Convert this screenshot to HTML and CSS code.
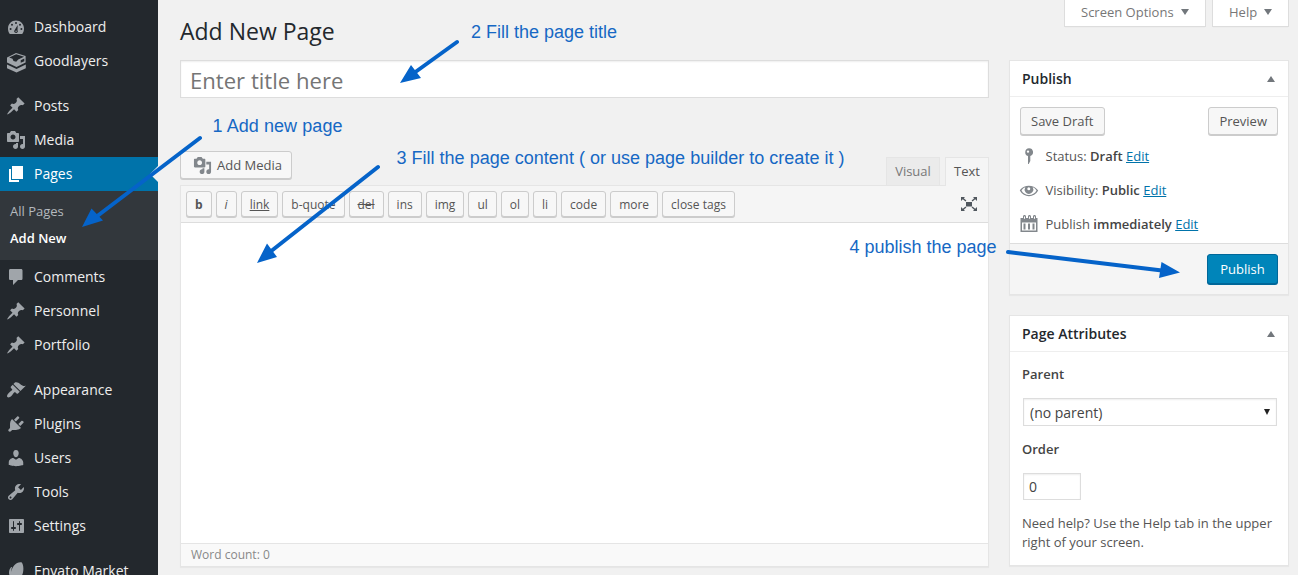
FILE: index.html
```html
<!DOCTYPE html>
<html lang="en">
<head>
<meta charset="utf-8">
<title>Add New Page</title>
<link rel="stylesheet" href="styles.css">
</head>
<body>
<svg class="defs" width="0" height="0">
  <symbol id="i-dash" viewBox="0 0 20 20"><path fill-rule="evenodd" d="M3.8 17h12.4C17.5 15.600 18 13.600 18 11.500 18 7 14.400 3.500 10 3.500S2 7 2 11.500c0 2.100.500 4.100 1.800 5.500zM9 6a1 1 0 1 1 2 0 1 1 0 0 1-2 0zM5 7.800a1 1 0 1 1 2 0 1 1 0 0 1-2 0zM13 7.800a1 1 0 1 1 2 0 1 1 0 0 1-2 0zM3.600 12a1 1 0 1 1 2 0 1 1 0 0 1-2 0zM14.400 12a1 1 0 1 1 2 0 1 1 0 0 1-2 0zM11.700 8l-.200 5.300c.900 1.300.100 2.700-1.500 2.700-1.700 0-2.400-1.700-1.300-2.900zM9.400 14.300a.700.700 0 1 0 1.400 0 .700.700 0 0 0-1.400 0z"/></symbol>
  <symbol id="i-good" viewBox="0 0 20 22"><path fill-rule="evenodd" d="M1 6.500L10 2l9.600 3v6.500L10.500 16 1 11.500zM3.200 6.400l3.300 1.300 1 2.300 2.700.8 2-2.300 5.900-2.700-7.900-2.500z"/><path d="M1 13.600l9.500 4.300 9.300-4.300v3.600L10.500 21.500 1 17.200z"/><path d="M14.700 9.200l3.600-1.600v2.600l-3.600 1.600z" fill="#23282d"/></symbol>
  <symbol id="i-post" viewBox="0 0 20 20"><path d="M10.440 3.020l1.820-1.820 6.360 6.350-1.830 1.820c-1.050-.68-2.480-.57-3.410.36l-.75.75c-.92.93-1.040 2.350-.35 3.410l-1.830 1.820-2.410-2.410-2.800 2.790c-.42.42-3.380 2.710-3.800 2.290s1.860-3.390 2.280-3.810l2.790-2.790L4.100 9.360l1.830-1.820c1.050.69 2.480.57 3.400-.36l.75-.75c.93-.92 1.050-2.350.36-3.410z"/></symbol>
  <symbol id="i-media" viewBox="0 0 20 20"><path d="M13 11V4c0-.55-.45-1-1-1h-1.670L9 1H5L3.670 3H2c-.55 0-1 .45-1 1v7c0 .55.45 1 1 1h10c.55 0 1-.45 1-1zM7 4.500c1.380 0 2.500 1.120 2.500 2.500S8.380 9.500 7 9.500 4.500 8.380 4.500 7 5.620 4.500 7 4.500zM14 6h5v10.500c0 1.380-1.120 2.500-2.500 2.500S14 17.880 14 16.500s1.120-2.500 2.500-2.500c.17 0 .34.02.5.05V9h-3V6zm-4 8.050V13h2v3.500c0 1.380-1.120 2.500-2.500 2.500S7 17.880 7 16.500 8.120 14 9.500 14c.17 0 .34.02.5.05z"/></symbol>
  <symbol id="i-page" viewBox="0 0 20 20"><path d="M6 15V2h11v13H6zm-1 1h8v2H3V5h2v11z"/></symbol>
  <symbol id="i-comment" viewBox="0 0 20 20"><path d="M4.500 2h10.500c1 0 1.500.6 1.500 1.500V11.500c0 1-.6 1.500-1.500 1.500h-3l-5 5v-5H4.500C3.600 13 3 12.500 3 11.500V3.500C3 2.600 3.500 2 4.500 2z"/></symbol>
  <symbol id="i-brush" viewBox="0 0 20 20"><path d="M14.480 11.060L7.410 3.990l1.500-1.500c.5-.56 2.300-.47 3.510.32 1.210.8 1.430 1.280 2.910 2.100 1.180.64 2.450 1.260 4.450.85zm-.71.71L6.700 4.700 4.930 6.470c-.39.39-.39 1.020 0 1.410l1.060 1.060c.39.39.39 1.030 0 1.420-.6.6-1.430 1.110-2.210 1.690-.35.26-.7.53-1.010.84C1.430 14.230.4 16.080 1.400 17.070c.99 1 2.840-.03 4.180-1.360.31-.31.58-.66.85-1.020.57-.78 1.080-1.610 1.690-2.210.39-.39 1.020-.39 1.410 0l1.060 1.060c.39.39 1.020.39 1.410 0z"/></symbol>
  <symbol id="i-plug" viewBox="0 0 20 20"><path d="M13.110 4.360L9.870 7.600 8 5.730l3.240-3.240c.35-.34 1.050-.2 1.560.32.52.51.66 1.210.31 1.550zm-8 1.770l.91-1.120 9.010 9.010-1.190.84c-.71.71-2.630 1.160-3.820 1.160H6.140L4.900 17.260c-.59.59-1.540.59-2.120 0-.59-.58-.59-1.530 0-2.120l1.240-1.240v-3.880c0-1.130.4-3.190 1.090-3.890zm7.260 3.970l3.240-3.240c.34-.35 1.040-.21 1.550.31.52.51.66 1.210.31 1.550l-3.240 3.250z"/></symbol>
  <symbol id="i-user" viewBox="0 0 20 20"><path d="M10 9.250c-2.270 0-2.730-3.440-2.730-3.440C7 4.020 7.820 2 9.970 2c2.160 0 2.980 2.020 2.710 3.810 0 0-.41 3.440-2.680 3.440zm0 2.570L12.720 10c2.390 0 4.520 2.330 4.520 4.530v2.490s-3.650 1.130-7.240 1.130c-3.650 0-7.240-1.130-7.240-1.130v-2.490c0-2.250 1.940-4.480 4.470-4.480z"/></symbol>
  <symbol id="i-tool" viewBox="0 0 20 20"><path d="M16.680 9.770c-1.340 1.340-3.300 1.670-4.950.99l-5.410 6.520c-.99.99-2.590.99-3.580 0s-.99-2.590 0-3.570l6.520-5.420c-.68-1.650-.35-3.610.99-4.950 1.280-1.280 3.120-1.620 4.720-1.060l-2.890 2.890 2.820 2.820 2.860-2.870c.53 1.580.18 3.390-1.080 4.650zM3.810 16.210c.4.39 1.040.39 1.430 0 .4-.4.4-1.040 0-1.430-.39-.4-1.030-.4-1.430 0-.39.39-.39 1.030 0 1.430z"/></symbol>
  <symbol id="i-set" viewBox="0 0 20 20"><path d="M18 16V4c0-.55-.45-1-1-1H4c-.55 0-1 .45-1 1v12c0 .55.45 1 1 1h13c.55 0 1-.45 1-1zM8 11h1c.55 0 1 .45 1 1s-.45 1-1 1H8v1.500c0 .28-.22.5-.5.5s-.5-.22-.5-.5V13H6c-.55 0-1-.45-1-1s.45-1 1-1h1V5.500c0-.28.22-.5.5-.5s.5.22.5.5V11zm5-2h-1c-.55 0-1-.45-1-1s.45-1 1-1h1V5.500c0-.28.22-.5.5-.5s.5.22.5.5V7h1c.55 0 1 .45 1 1s-.45 1-1 1h-1v5.500c0 .28-.22.5-.5.5s-.5-.22-.5-.5V9z"/></symbol>
  <symbol id="i-envato" viewBox="0 0 20 20"><path d="M15.500 1.300C17 2.600 18 7 17 11.500c-.8 3.900-3.500 6.500-7.200 6.500-4 0-6.800-2.800-6.800-6.300 0-2.400.9-4.200 2.200-5.600.5-.3.900 0 .7.500-.5 1.400-.6 2.700-.3 4.100C5.700 5.600 10.500.5 15.500 1.300z"/></symbol>
  <symbol id="i-pin" viewBox="0 0 20 20"><path fill-rule="evenodd" d="M10 2.200a4 4 0 0 1 1.300 7.800V15L9.700 18H9V10a4 4 0 0 1 1-7.800zM7.800 5.600a1.200 1.200 0 1 0 2.400 0 1.200 1.200 0 0 0-2.400 0z"/></symbol>
  <symbol id="i-eye" viewBox="0 0 20 20"><path fill-rule="evenodd" d="M18.300 9.500C15 4.900 5.500 3.800 1.200 9.800L.8 10.500c4 7.500 14.400 7.500 18.400 0zM10 15c-3.100 0-6-1.600-7.500-4.500C3.400 9 4.700 7.900 6.300 7.200a4.400 4.400 0 0 0 .2 5 4.300 4.300 0 0 0 7-.1 4.400 4.400 0 0 0 .2-4.900c1.600.7 2.900 1.800 3.800 3.300C16 13.400 13.100 15 10 15zM9.800 7.200a1.500 1.500 0 1 1 0 3 1.500 1.500 0 0 1 0-3z"/></symbol>
  <symbol id="i-cal" viewBox="0 0 20 20"><path fill-rule="evenodd" d="M4 2.500c0-2 3-2 3 0V4h2V2.500c0-2 3-2 3 0V4h2V2.500c0-2 3-2 3 0V4h1.500v14h-17V4H4zM3 8.500V16.500h14V8.500zM4.500 9.500h2v6h-2zM9 9.500h2v6H9zM13.500 9.500h2v6h-2zM5 2.500v2.200h1V2.500zM10 2.500v2.200h1V2.500zM15 2.500v2.200h1V2.500z"/></symbol>
  <symbol id="i-full" viewBox="0 0 20 20"><path d="M7 8h6v4.500H7zM2 3h4L4.800 4.200 7.400 6.600 6.500 7.500 3.800 5.200 2 7zM18 3v4l-1.800-1.800-2.700 2.300-.9-.9 2.600-2.400L14 3zM2 17v-4l1.800 1.800 2.700-2.300.9.900-2.600 2.400L6 17zM18 17h-4l1.200-1.200-2.600-2.400.9-.9 2.700 2.300L18 13z"/></symbol>
</svg>

<div class="app">
  <nav class="sidebar">
    <a class="item"><svg class="icon"><use href="#i-dash"/></svg><span>Dashboard</span></a>
    <a class="item"><svg class="icon good"><use href="#i-good"/></svg><span>Goodlayers</span></a>
    <div class="sep"></div>
    <a class="item"><svg class="icon"><use href="#i-post"/></svg><span>Posts</span></a>
    <a class="item"><svg class="icon"><use href="#i-media"/></svg><span>Media</span></a>
    <a class="item current"><svg class="icon"><use href="#i-page"/></svg><span>Pages</span></a>
    <div class="submenu"><a>All Pages</a><a class="on">Add New</a></div>
    <a class="item"><svg class="icon"><use href="#i-comment"/></svg><span>Comments</span></a>
    <a class="item"><svg class="icon"><use href="#i-post"/></svg><span>Personnel</span></a>
    <a class="item"><svg class="icon"><use href="#i-post"/></svg><span>Portfolio</span></a>
    <div class="sep"></div>
    <a class="item"><svg class="icon"><use href="#i-brush"/></svg><span>Appearance</span></a>
    <a class="item"><svg class="icon"><use href="#i-plug"/></svg><span>Plugins</span></a>
    <a class="item"><svg class="icon"><use href="#i-user"/></svg><span>Users</span></a>
    <a class="item"><svg class="icon"><use href="#i-tool"/></svg><span>Tools</span></a>
    <a class="item"><svg class="icon"><use href="#i-set"/></svg><span>Settings</span></a>
    <div class="sep"></div>
    <a class="item"><svg class="icon"><use href="#i-envato"/></svg><span>Envato Market</span></a>
  </nav>

  <main class="main">
    <header class="head">
      <h1>Add New Page</h1>
      <div class="meta">
        <a class="meta-tab options">Screen Options<i class="down"></i></a>
        <a class="meta-tab help">Help<i class="down"></i></a>
      </div>
    </header>
    <div class="cols">
      <section class="content">
        <div class="title">Enter title here</div>
        <div class="tools">
          <a class="btn media"><svg class="icon"><use href="#i-media"/></svg>Add Media</a>
          <div class="tabs"><a class="tab visual">Visual</a><a class="tab text">Text</a></div>
        </div>
        <div class="editor">
          <div class="toolbar">
            <a class="qt b">b</a><a class="qt i">i</a><a class="qt u">link</a><a class="qt">b-quote</a><a class="qt s">del</a><a class="qt">ins</a><a class="qt">img</a><a class="qt">ul</a><a class="qt">ol</a><a class="qt">li</a><a class="qt">code</a><a class="qt">more</a><a class="qt">close tags</a>
            <svg class="icon full"><use href="#i-full"/></svg>
          </div>
          <div class="area"></div>
          <div class="status">Word count: 0</div>
        </div>
      </section>
      <aside class="side">
        <section class="box">
          <h2>Publish<i class="up"></i></h2>
          <div class="actions"><a class="btn">Save Draft</a><a class="btn">Preview</a></div>
          <p class="row"><svg class="icon"><use href="#i-pin"/></svg><span>Status: <b>Draft</b> <a class="link">Edit</a></span></p>
          <p class="row"><svg class="icon"><use href="#i-eye"/></svg><span>Visibility: <b>Public</b> <a class="link">Edit</a></span></p>
          <p class="row"><svg class="icon"><use href="#i-cal"/></svg><span>Publish <b>immediately</b> <a class="link">Edit</a></span></p>
          <div class="foot"><a class="primary">Publish</a></div>
        </section>
        <section class="box attrs">
          <h2>Page Attributes<i class="up"></i></h2>
          <div class="fields">
            <b>Parent</b>
            <div class="select">(no parent)<i class="caret"></i></div>
            <b>Order</b>
            <div class="order">0</div>
            <p>Need help? Use the Help tab in the upper right of your screen.</p>
          </div>
        </section>
      </aside>
    </div>
  </main>
</div>

<svg class="notes" viewBox="0 0 1298 575">
  <path class="line" d="M200 138L96 217M457 42L414 73M378 167L270 252M1008 252L1162 270.500"/>
  <path d="M82 227L91.500 208.500L103 220.500zM400 83L411 65L421 78zM257 263L267 243.500L277 257zM1180 272.500L1161.500 262L1159 278z"/>
  <text x="212.500" y="132" textLength="130">1 Add new page</text>
  <text x="471" y="38" textLength="146">2 Fill the page title</text>
  <text x="396.500" y="164" textLength="448">3 Fill the page content ( or use page builder to create it )</text>
  <text x="849.500" y="253" textLength="147">4 publish the page</text>
</svg>
</body>
</html>
```
FILE: styles.css
```css
* { box-sizing: border-box; }
body {
  margin: 0;
  height: 575px;
  overflow: hidden;
  background: #f1f1f1;
  color: #555;
  font: 13px/19px "Open Sans", sans-serif;
}
.defs { position: absolute; }
h1, h2, p { margin: 0; }
b { font-weight: 600; color: #444; }
.icon { width: 20px; height: 20px; fill: currentColor; flex: none; }
.app { display: flex; height: 575px; overflow: hidden; }

.sidebar {
  width: 158px;
  flex: none;
  padding-top: 10px;
  background: #23282d;
}
.item {
  display: flex;
  align-items: center;
  gap: 8px;
  height: 34px;
  padding-left: 6px;
  color: #eee;
  font-size: 14px;
  white-space: nowrap;
}
.item span { padding-bottom: 2px; }
.item .icon { color: #a0a5aa; }
.item .good { height: 22px; margin-top: 1px; }
.item.current { position: relative; background: #0073aa; color: #fff; }
.item.current .icon { color: #fff; }
.item.current::after {
  content: "";
  position: absolute;
  right: 0;
  top: 9px;
  border: 8px solid transparent;
  border-right-color: #f1f1f1;
  border-left: 0;
}
.sep { height: 11px; }
.submenu {
  display: flex;
  flex-direction: column;
  height: 69px;
  padding: 7px 10px;
  background: #32373c;
  color: #b4b9be;
  line-height: 27px;
}
.submenu .on { color: #fff; font-weight: 600; }

.main { flex: 1; padding: 0 9px 0 22px; }
.head { display: flex; justify-content: space-between; height: 60px; }
h1 {
  padding-top: 17px;
  color: #23282d;
  font-size: 23px;
  font-weight: 400;
  line-height: 29px;
}
.meta { display: flex; gap: 6px; height: 27px; }
.meta-tab {
  display: flex;
  align-items: center;
  justify-content: space-between;
  padding: 0 16px 2px;
  border: 1px solid #ddd;
  border-top: 0;
  background: #fff;
  color: #777;
  box-shadow: 0 1px 1px -1px rgba(0, 0, 0, .1);
}
.options { width: 142px; }
.help { width: 77px; }
.down { border: 4px solid transparent; border-top: 6px solid #72777c; border-bottom: 0; }
.up { border: 4px solid transparent; border-bottom: 6px solid #72777c; border-top: 0; }
.caret { border: 3px solid transparent; border-top: 6px solid #222; border-bottom: 0; margin-right: 1px; }

.cols { display: flex; gap: 20px; }
.content { width: 809px; }
.title {
  height: 38px;
  padding: 0 9px;
  border: 1px solid #ddd;
  background: #fff;
  box-shadow: inset 0 1px 2px rgba(0, 0, 0, .07);
  color: #757575;
  font-size: 22.100px;
  line-height: 39px;
}
.tools {
  display: flex;
  justify-content: space-between;
  align-items: flex-end;
  height: 87px;
}
.btn {
  display: inline-flex;
  align-items: center;
  height: 28px;
  padding: 0 10px;
  border: 1px solid #ccc;
  border-radius: 3px;
  background: #f7f7f7;
  box-shadow: 0 1px 0 #ccc;
}
.media { margin-bottom: 6px; gap: 5px; padding: 0 9px 0 12px; }
.media .icon { width: 19px; height: 19px; color: #82878c; }
.tabs { display: flex; gap: 5px; height: 29px; align-items: flex-end; }
.tab {
  height: 28px;
  border: 1px solid #e5e5e5;
  border-bottom: 0;
  font-size: 13px;
  line-height: 27px;
  text-align: center;
}
.visual { width: 54px; background: #ebebeb; color: #777; }
.text { position: relative; z-index: 1; width: 44px; height: 29px; margin-bottom: -1px; background: #f5f5f5; }
.editor {
  height: 382px;
  border: 1px solid #e5e5e5;
  background: #fff;
  box-shadow: 0 1px 1px rgba(0, 0, 0, .04);
}
.toolbar {
  display: flex;
  gap: 4px;
  height: 37px;
  padding: 5px;
  border-bottom: 1px solid #ddd;
  background: #f5f5f5;
}
.qt {
  height: 26px;
  padding: 0 8px;
  border: 1px solid #ccc;
  border-radius: 3px;
  background: #f7f7f7;
  box-shadow: 0 1px 0 #ccc;
  font-size: 12px;
  line-height: 25px;
}
.b { font-weight: 700; }
.i { font-style: italic; }
.u { text-decoration: underline; }
.s { text-decoration: line-through; }
.full { margin: 3px 4px 0 auto; color: #50575e; }
.area { height: 320px; }
.status {
  height: 23px;
  padding-left: 10px;
  border-top: 1px solid #e5e5e5;
  background: #f9f9f9;
  color: #888;
  font-size: 12px;
  line-height: 22px;
}

.side { width: 280px; }
.box {
  border: 1px solid #e5e5e5;
  background: #fff;
  box-shadow: 0 1px 1px rgba(0, 0, 0, .04);
}
.box h2 {
  display: flex;
  align-items: center;
  justify-content: space-between;
  height: 36px;
  padding: 0 13px 0 12px;
  border-bottom: 1px solid #eee;
  color: #23282d;
  font-size: 14px;
  font-weight: 600;
}
.actions { display: flex; justify-content: space-between; padding: 10px 10px 4px; }
.row { display: flex; align-items: center; gap: 6.500px; height: 34px; padding-left: 9px; }
.row .icon { color: #82878c; }
.link { color: #0073aa; text-decoration: underline; }
.foot {
  display: flex;
  justify-content: flex-end;
  height: 51px;
  margin-top: 2px;
  padding: 10px;
  border-top: 1px solid #ddd;
  background: #f5f5f5;
}
.primary {
  width: 71px;
  height: 30px;
  border: 1px solid #006799;
  border-radius: 3px;
  background: #0085ba;
  box-shadow: 0 1px 0 #006799;
  color: #fff;
  line-height: 28px;
  text-align: center;
}
.attrs { height: 251px; margin-top: 20px; }
.fields { padding: 13px 11px 0 12px; }
.fields > b { display: block; }
.select, .order {
  margin-left: 1px;
  padding: 0 5px;
  border: 1px solid #ddd;
  box-shadow: inset 0 1px 2px rgba(0, 0, 0, .07);
  color: #444;
  font-size: 14px;
}
.select {
  display: flex;
  align-items: center;
  justify-content: space-between;
  height: 28px;
  margin-top: 14px;
  margin-bottom: 14px;
  padding-left: 6px;
}
.order { width: 58px; height: 27px; margin-top: 14px; line-height: 26px; }
.fields p { margin-top: 14px; }

.notes {
  position: absolute;
  left: 0;
  top: 0;
  width: 1298px;
  height: 575px;
  fill: #0563c9;
  font: 18px "Liberation Sans", Arial, sans-serif;
  pointer-events: none;
}
.notes text { fill: #1668c4; }
.line { fill: none; stroke: #0563c9; stroke-width: 4; stroke-linecap: round; }
```
